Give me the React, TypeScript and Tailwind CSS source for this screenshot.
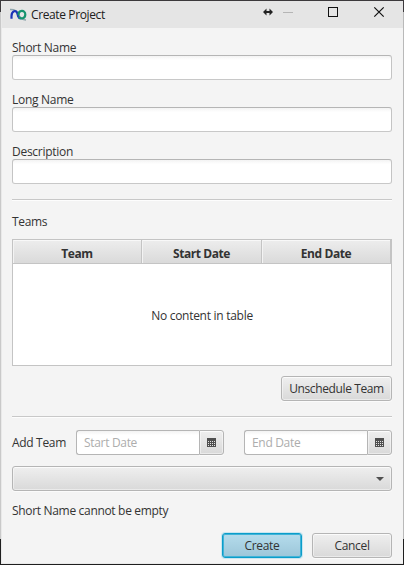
import React from "react";

const input =
  "h-[25px] w-full rounded-[3px] border border-[#c4c4c4] border-t-[#b5b5b5] border-b-[#c8c8c8] bg-linear-to-b from-[#f3f3f3] via-white via-[18%] to-white outline-none";
const raised =
  "border border-[#b5b5b5] bg-linear-to-b from-[#efefef] to-[#d9d9d9] shadow-[inset_0_0_0_1px_rgba(255,255,255,0.45),inset_0_1px_0_rgba(255,255,255,0.5),0_1px_0_#fbfbfb]";

function Field({ label }: { label: string }) {
  return (
    <label className="flex flex-col">
      <span className="h-[17px] leading-[20px] tracking-[-0.28px]">{label}</span>
      <input className={input} />
    </label>
  );
}

function Separator() {
  return <div className="h-[2px] border-t border-[#c8c8c8] bg-[#fdfdfd]" />;
}

function CalendarIcon() {
  return (
    <svg width="9" height="9" viewBox="0 0 9 9" shapeRendering="crispEdges">
      <path fill="#4f4f4f" d="M0 0h9v9H0z" />
      <path
        stroke="#e2e2e2"
        strokeDasharray="1 1"
        d="M1 3.5h7M1 5.5h7M1 7.5h7"
      />
    </svg>
  );
}

function DateField({ placeholder }: { placeholder: string }) {
  return (
    <div className="flex h-[25px] w-[148px]">
      <input
        placeholder={placeholder}
        className="w-[123px] rounded-l-[3px] border border-r-0 border-[#b5b5b5] bg-linear-to-b from-[#f3f3f3] via-white via-[18%] to-white px-[7px] pt-px outline-none placeholder:text-[#adadad]"
      />
      <button className={`flex w-[25px] items-center justify-center rounded-r-[3px] ${raised}`}>
        <CalendarIcon />
      </button>
    </div>
  );
}

function TitleBar() {
  return (
    <header className="flex h-[27px] items-center bg-[#e5e5e5]">
      <svg className="ml-[8px] shrink-0" width="17" height="14" viewBox="0 0 17 14" fill="none">
        <path d="M0 1.500C5 1.200 7.500 3 9 7s3.500 4.800 7 5" stroke="#8fa5ad" strokeWidth="1.400" />
        <path d="M1.500 10.800V8C1.700 2.200 6.300 2 7.300 5.300l.9 3c.6 1.700 1.600 2.200 2.600 2.200" stroke="#1c34b8" strokeWidth="2.200" />
        <path d="M8.500 7.500C8.300 1.600 15.300 1.600 15.300 6.500c0 4.400-5 4.800-6.300 2.200" stroke="#16936e" strokeWidth="2.200" />
      </svg>
      <span className="ml-[4px] grow leading-[16px] tracking-[-0.38px] text-[#202020]">Create Project</span>
      <svg className="shrink-0" width="141" height="27" viewBox="262 1 141 27" fill="none">
        <path fill="#222" d="M263 12l3.500-3.500V11h3V8.500L273 12l-3.500 3.500V13h-3v2.500z" />
        <path stroke="#b5b5b5" d="M283 12.500h10" shapeRendering="crispEdges" />
        <path stroke="#111" d="M328.500 7.500h9v9h-9z" shapeRendering="crispEdges" />
        <path stroke="#111" strokeWidth="1.200" d="M374.300 7.300l9.400 9.400M383.700 7.300l-9.400 9.400" />
      </svg>
    </header>
  );
}

const columns = [
  { title: "Team", width: "w-[129px]" },
  { title: "Start Date", width: "w-[120px]" },
  { title: "End Date", width: "grow" },
];

export default function App() {
  return (
    <div className="flex h-[565px] w-[404px] flex-col overflow-hidden border-t border-b border-t-[#3c393c] border-b-[#1f1f1f] bg-[#f4f4f4] font-['Open_Sans','Noto_Sans',sans-serif] text-[12px] tracking-[-0.32px] text-[#333]">
      <div className="flex grow">
        <div className="flex w-px flex-col">
          <div className="h-[11px] bg-[#3c393c]" />
          <div className="grow bg-[#c9c9c9]" />
          <div className="h-[25px] bg-[#1f1f1f]" />
        </div>
        <div className="flex w-[402px] flex-col border-l border-b border-[#e9e9e9]">
          <TitleBar />
          <main className="flex flex-col pt-[10px] pr-[11px] pl-[10px]">
            <div className="flex flex-col gap-[10px]">
              <Field label="Short Name" />
              <Field label="Long Name" />
              <Field label="Description" />
            </div>
            <div className="mt-[15px]"><Separator /></div>
            <h2 className="mt-[12px] h-[16px] leading-[18px]">Teams</h2>
            <div className="mt-[10px] flex h-[127px] flex-col border border-[#c4c4c4] bg-white">
              <div className="flex h-[24px] border-b border-[#c4c4c4] bg-linear-to-b from-[#ededed] to-[#dadada] text-center leading-[27px] font-bold tracking-[-0.42px] shadow-[inset_0_1px_0_#f8f8f8]">
                {columns.map((column) => (
                  <div
                    key={column.title}
                    className={`h-[23px] border-r border-[#c4c4c4] shadow-[inset_1px_0_0_#f3f3f3] ${column.width}`}
                  >
                    {column.title}
                  </div>
                ))}
              </div>
              <div className="flex grow items-center justify-center pt-[2px] tracking-[-0.28px]">No content in table</div>
            </div>
            <button className={`mt-[10px] h-[25px] w-[111px] self-end rounded-[3px] pt-px tracking-[-0.38px] ${raised}`}>
              Unschedule Team
            </button>
            <div className="mt-[15px]"><Separator /></div>
            <div className="mt-[12px] flex items-center">
              <span className="w-[64px] pt-px whitespace-nowrap">Add Team</span>
              <div className="flex grow justify-end gap-[20px]">
                <DateField placeholder="Start Date" />
                <DateField placeholder="End Date" />
              </div>
            </div>
            <button className={`mt-[11px] flex h-[25px] items-center justify-end rounded-[3px] pr-[7px] ${raised}`}>
              <svg width="8" height="4" viewBox="0 0 8 4"><path fill="#505050" d="M0 0h8L4 4z" /></svg>
            </button>
            <p className="mt-[11px] h-[16px] leading-[17px]">Short Name cannot be empty</p>
            <div className="mt-[15px] flex justify-end gap-[10px]">
              <button className="h-[25px] w-[80px] rounded-[3px] border border-[#0b9dca] bg-linear-to-b from-[#b5dcec] to-[#9cc6d9] pt-px shadow-[inset_0_0_0_1px_#40b3d7,0_0_0_1px_#c8e6f0]">
                Create
              </button>
              <button className={`h-[25px] w-[80px] rounded-[3px] pt-px ${raised}`}>Cancel</button>
            </div>
          </main>
        </div>
        <div className="flex w-px flex-col">
          <div className="h-[11px] bg-[#3c393c]" />
          <div className="grow bg-[#b9b9b9]" />
          <div className="h-[25px] bg-[#1f1f1f]" />
        </div>
      </div>
    </div>
  );
}
